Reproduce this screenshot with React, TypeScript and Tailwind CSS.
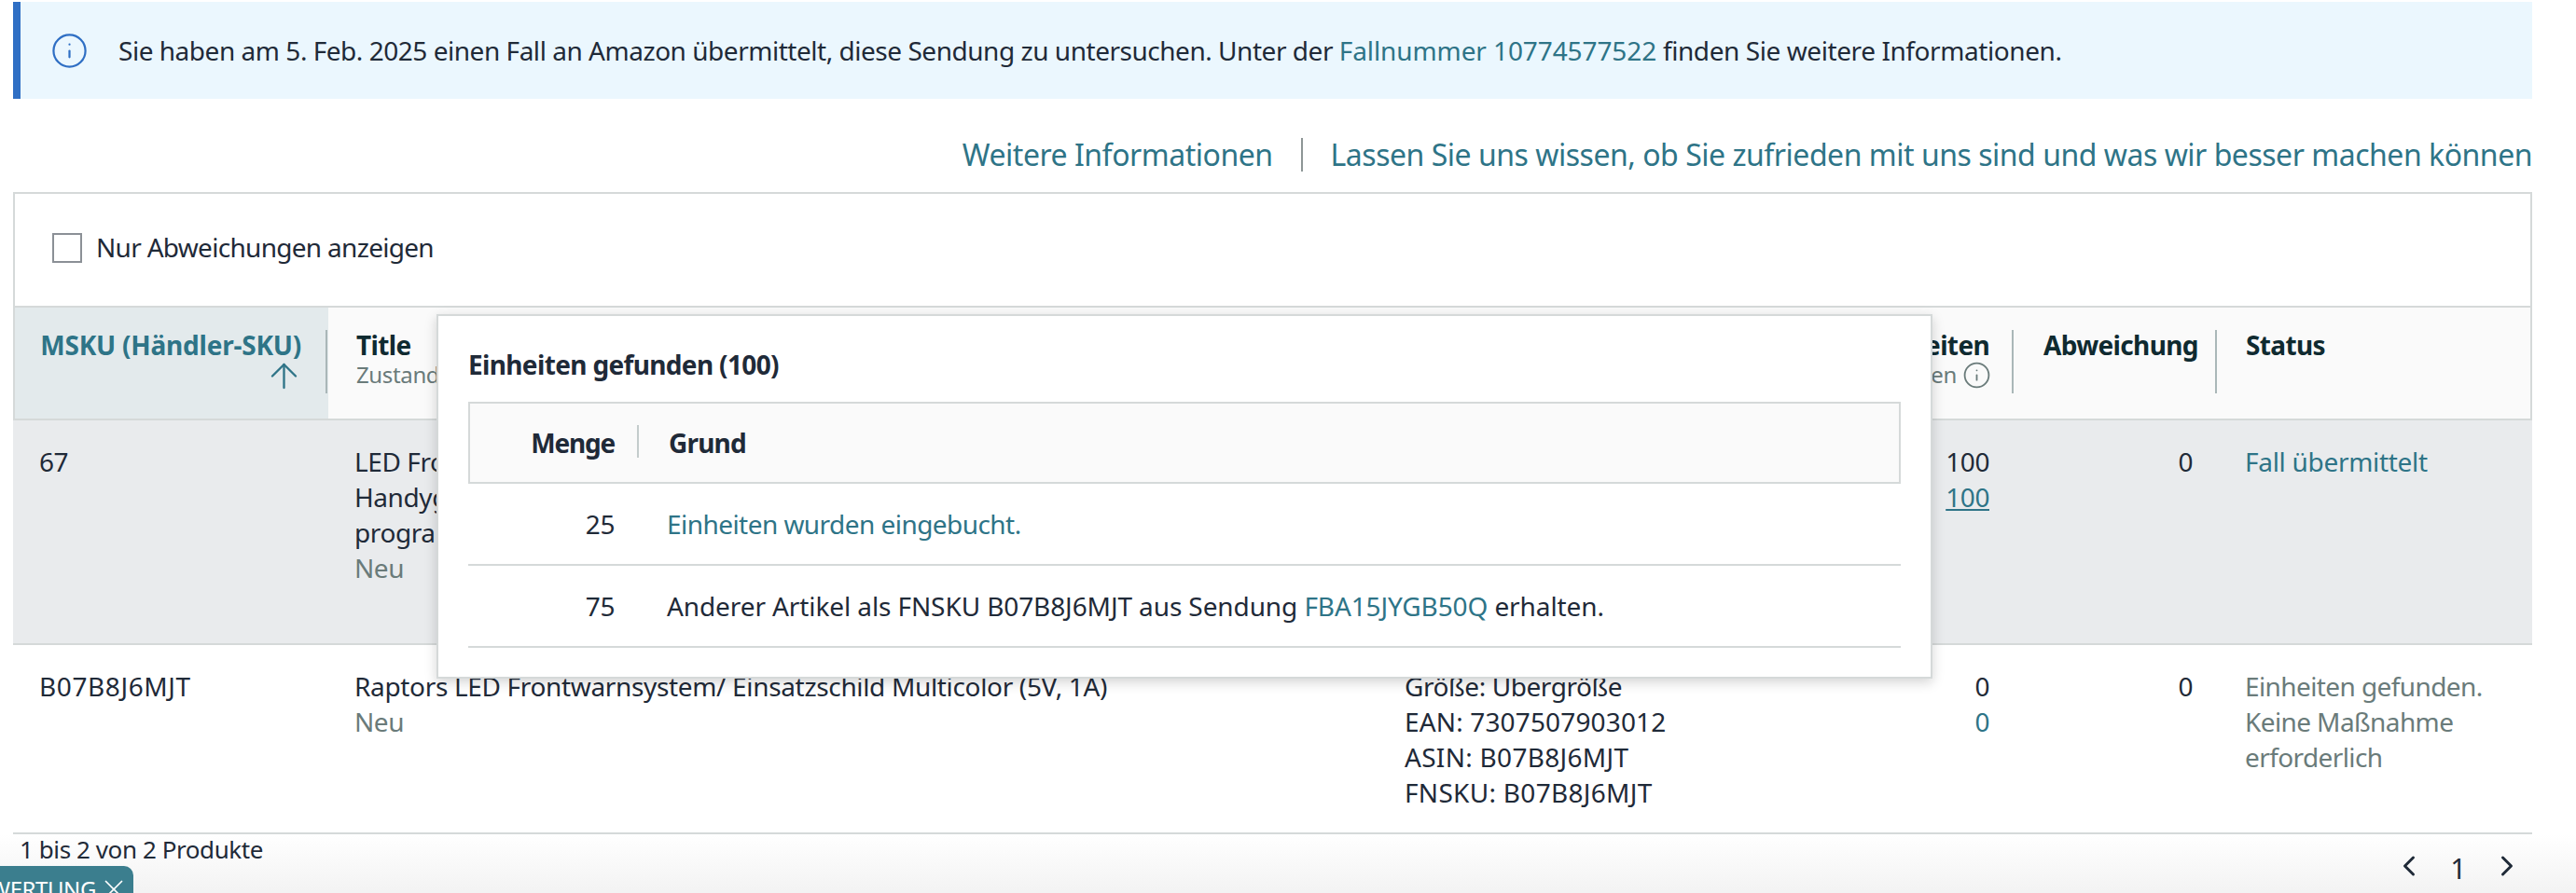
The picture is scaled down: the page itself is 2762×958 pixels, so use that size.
import { ArrowUp, ChevronLeft, ChevronRight, Info, X } from "lucide-react";

const link = "text-[#2e7487]";

export default function App() {
  return (
    <div className="relative h-[958px] w-[2762px] overflow-hidden bg-white pt-[2px] font-['Noto_Sans',sans-serif] text-[28px] leading-[38px] tracking-[-0.42px] text-[#1f2a38]">
      <div className="ml-[14px] flex h-[104px] w-[2701px] items-center border-l-8 border-[#2f6fc4] bg-[#ebf7fe] pl-[32px]">
        <Info size={41} strokeWidth={1.3} className="text-[#2f6fc4]" />
        <p className="ml-[32px] whitespace-nowrap">
          <span className="tracking-[-0.47px]">Sie haben am 5. Feb. 2025 einen Fall an Amazon übermittelt, diese Sendung zu untersuchen. Unter der </span>
          <span className={`tracking-[-0.1px] ${link}`}>Fallnummer 10774577522</span> finden Sie weitere Informationen.
        </p>
      </div>

      <div className={`ml-[14px] mt-[42px] flex h-[36px] w-[2701px] items-center justify-end text-[32px] tracking-[-0.48px] ${link}`}>
        <span>Weitere Informationen</span>
        <span className="mx-[30px] h-[36px] w-[2px] bg-[#8d9696]" />
        <span>Lassen Sie uns wissen, ob Sie zufrieden mit uns sind und was wir besser machen können</span>
      </div>

      <div className="ml-[14px] mt-[22px] w-[2701px]">
        <div className="flex h-[122px] items-center border-x-2 border-t-2 border-[#d5d9d9] pb-[4px] pl-[40px]">
          <span className="h-[32px] w-[32px] border-2 border-[#8b9096] bg-white" />
          <span className="mb-[3px] ml-[15px] tracking-[-0.7px]">Nur Abweichungen anzeigen</span>
        </div>

        <div className="flex h-[123px] border-x-2 border-y-2 border-[#d5d9d9] bg-[#fafafa] font-bold tracking-[-0.65px] text-[#0f2a30]">
          <div className="flex w-[336px] justify-end bg-[#e3eaec] pr-[1px] pt-[24px]">
            <div className={`mr-[26px] flex w-[290px] flex-col items-end ${link} -mt-[3px]`}>
              <span className="whitespace-nowrap tracking-[-0.22px]">MSKU (Händler-SKU)</span>
              <ArrowUp size={43} strokeWidth={1.3} className="-mr-[3px] -mt-[7px]" />
            </div>
            <span className="h-[68px] w-[2px] bg-[#aab7b8]" />
          </div>
          <div className="w-[1138px] pl-[30px] pt-[21px]">
            <div>Title</div>
            <div className="-mt-[6px] text-[24px] font-normal tracking-[-0.36px] text-[#6a7b7a]">Zustand</div>
          </div>
          <div className="w-[410px] pt-[21px]">Details</div>
          <div className="flex w-[259px] justify-between pt-[21px]">
            <div className="w-[233px] text-right">
              <div>Einheiten</div>
              <div className="-mt-[6px] flex items-center justify-end gap-[6px] text-[24px] font-normal tracking-[-0.36px] text-[#6a7b7a]">
                gefunden <Info size={31} strokeWidth={1.4} className="-mr-[2px]" />
              </div>
            </div>
            <span className="mt-[3px] h-[68px] w-[2px] bg-[#aab7b8]" />
          </div>
          <div className="flex w-[218px] justify-between pt-[21px]">
            <span className="ml-[32px]">Abweichung</span>
            <span className="mt-[3px] h-[68px] w-[2px] bg-[#aab7b8]" />
          </div>
          <div className="pl-[31px] pt-[21px]">Status</div>
        </div>

        <div className="flex h-[241px] border-b-2 border-[#d5d9d9] bg-[#e9ebed] pt-[25px]">
          <div className="w-[338px] pl-[28px]">67</div>
          <div className="w-[1138px] pl-[28px]">
            <div className="w-[1000px]">
              LED Frontwarnsystem Handygeeignet programmierbar
              <br />
              Handygesteuert
              <br />
              programmierbar
            </div>
            <div className="text-[#6a7b7a]">Neu</div>
          </div>
          <div className="w-[410px]">Größe: Übergröße</div>
          <div className="w-[260px] pr-[27px] text-right">
            <div>100</div>
            <div className={`underline ${link}`}>100</div>
          </div>
          <div className="w-[218px] pr-[27px] text-right">0</div>
          <div className={`pl-[29px] tracking-[-0.3px] ${link}`}>Fall übermittelt</div>
        </div>

        <div className="flex h-[203px] border-b-2 border-[#d5d9d9] bg-white pt-[25px]">
          <div className="w-[338px] pl-[28px] tracking-[0.6px]">B07B8J6MJT</div>
          <div className="w-[1138px] pl-[28px]">
            <div className="tracking-[-0.34px]">Raptors LED Frontwarnsystem/ Einsatzschild Multicolor (5V, 1A)</div>
            <div className="text-[#6a7b7a]">Neu</div>
          </div>
          <div className="w-[410px] pl-[16px]">
            <div>Größe: Übergröße</div>
            <div className="tracking-[0.15px]">EAN: 7307507903012</div>
            <div className="tracking-[0.3px]">ASIN: B07B8J6MJT</div>
            <div className="tracking-[0.3px]">FNSKU: B07B8J6MJT</div>
          </div>
          <div className="w-[260px] pr-[27px] text-right">
            <div>0</div>
            <div className={link}>0</div>
          </div>
          <div className="w-[218px] pr-[27px] text-right">0</div>
          <div className="w-[300px] pl-[29px] tracking-[-0.6px] text-[#6a7b7a]">Einheiten gefunden. Keine Maßnahme erforderlich</div>
        </div>
      </div>

      <div className="flex h-[67px] items-start justify-between bg-gradient-to-b from-white to-[#f2f2f2] pl-[21px] pr-[56px]">
        <span className="-mt-[3px] text-[26px]">1 bis 2 von 2 Produkte</span>
        <div className="mt-[12px] flex items-center">
          <ChevronLeft size={36} strokeWidth={2} />
          <span className="mx-[26px] mt-[6px] text-[30px]">1</span>
          <ChevronRight size={36} strokeWidth={2} />
        </div>
      </div>

      <div className="absolute bottom-0 left-0 flex h-[29px] w-[143px] justify-end overflow-hidden rounded-tr-[10px] bg-[#3b7e8e] pr-[4px] pt-[8px] text-[24px] leading-[34px] text-white">
        <span className="whitespace-nowrap">BEWERTUNG</span>
        <X size={34} strokeWidth={1.2} className="ml-[2px] shrink-0" />
      </div>

      <div className="absolute left-[468px] top-[337px] h-[391px] w-[1604px] border-2 border-[#d5d9d9] bg-white px-[32px] pt-[33px] shadow-[0_4px_12px_rgba(15,17,17,0.18)]">
        <div className="font-bold tracking-[-0.65px]">Einheiten gefunden (100)</div>
        <div className="mt-[21px] flex h-[88px] border-2 border-[#d5d9d9] bg-[#fafafa] pt-[23px] font-bold">
          <div className="w-[155px] text-right tracking-[-1.2px]">Menge</div>
          <span className="ml-[24px] h-[35px] w-[2px] bg-[#c4cccc]" />
          <div className="ml-[32px] tracking-[-0.8px]">Grund</div>
        </div>
        <div className="flex h-[88px] items-center border-b-2 border-[#d5d9d9]">
          <div className="w-[157px] text-right">25</div>
          <div className={`ml-[56px] tracking-[-0.55px] ${link}`}>Einheiten wurden eingebucht.</div>
        </div>
        <div className="flex h-[88px] items-center border-b-2 border-[#d5d9d9]">
          <div className="w-[157px] text-right">75</div>
          <div className="ml-[56px] tracking-[-0.1px]">
            Anderer Artikel als FNSKU B07B8J6MJT aus Sendung <span className={link}>FBA15JYGB50Q</span> erhalten.
          </div>
        </div>
      </div>
    </div>
  );
}
